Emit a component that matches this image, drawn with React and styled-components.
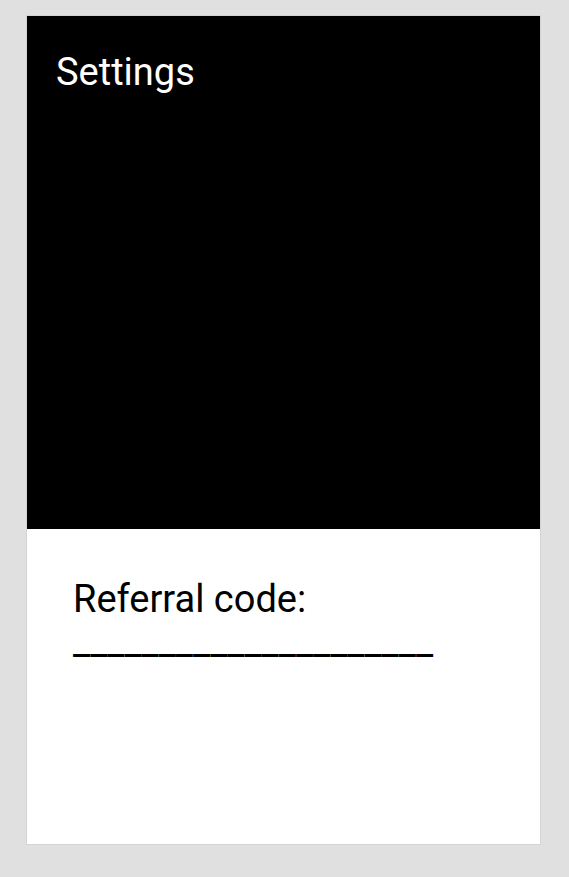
import styled, { createGlobalStyle } from 'styled-components';

const GlobalStyle = createGlobalStyle`
  html, body {
    margin: 0;
    padding: 0;
    background: #e0e0e0;
  }
  body {
    font-family: Roboto, "Noto Sans", sans-serif;
  }
`;

const Page = styled.div`
  width: 569px;
  height: 877px;
  padding: 16px 29px 33px 27px;
  box-sizing: border-box;
`;

const Card = styled.div`
  height: 100%;
  display: flex;
  flex-direction: column;
  background: #fff;
  box-shadow: 0 0 0 1px rgba(0, 0, 0, 0.05);
`;

const Header = styled.div`
  height: 513px;
  flex-shrink: 0;
  background: #000;
  color: #fff;
  padding: 34px 29px;
  box-sizing: border-box;
`;

const Title = styled.h1`
  margin: 0;
  font-size: 38px;
  font-weight: 400;
  line-height: normal;
`;

const Body = styled.div`
  padding: 49px 46px;
`;

const Field = styled.p`
  margin: 0;
  font-size: 38px;
  line-height: 42px;
  color: #000;
`;

export default function App() {
  return (
    <>
      <GlobalStyle />
      <Page>
        <Card>
          <Header>
            <Title>Settings</Title>
          </Header>
          <Body>
            <Field>Referral code:</Field>
            <Field>_____________________</Field>
          </Body>
        </Card>
      </Page>
    </>
  );
}
